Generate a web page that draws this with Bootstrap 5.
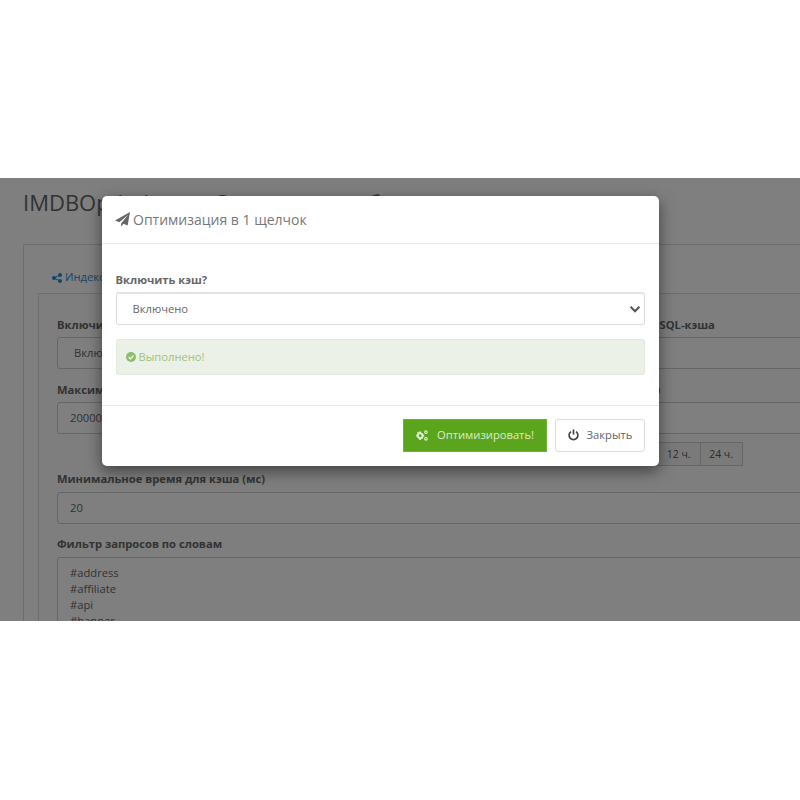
<!DOCTYPE html>
<html lang="ru">
<head>
<meta charset="utf-8">
<title>IMDBOptimizer</title>
<link href="https://cdn.jsdelivr.net/npm/bootstrap@5.3.0/dist/css/bootstrap.min.css" rel="stylesheet">
<style>
html,body{background:#fff;margin:0;padding:0;overflow:hidden}
body{font-family:"Open Sans","Noto Sans",sans-serif;font-size:11.2px;color:#666}
.shot{margin-top:178px;height:443px;position:relative;overflow:hidden;background:#fff}
.page-pad{padding:0 0 0 23px;width:900px}
.page-title{font-family:"Open Sans",sans-serif;font-size:22px;line-height:30px;margin:9px 0 27px;color:#666;font-weight:400;white-space:nowrap}
.outer-box{border:1px solid #ddd;padding:17px 0 0 14px}
.tab-link{display:block;height:31px;padding-left:14px;color:#1e91cf;font-size:11.2px;line-height:30px;margin-bottom:0}
.inner-box{border:1px solid #ddd;padding:23px 0 0 18px;background:#fcfcfc}
.two-col{display:grid;grid-template-columns:340px 1fr;column-gap:163px;width:850px}
.fld-label{font-weight:700;font-size:11.2px;color:#666;line-height:16px;margin-bottom:4px;display:block;white-space:nowrap}
.fld{display:block;width:100%;height:32px;border:1px solid #ccc;border-radius:3px;background:#fff;color:#666;font-size:11.2px;line-height:30px;padding:0 12px;margin-bottom:13px}
.fld-sel{padding-left:16px}
.full{width:850px}
.full .fld{margin-bottom:12px}
.full .fld-label{margin-bottom:5px}
.gap-btns{display:flex;justify-content:flex-end;height:24px;margin-top:-5px;margin-bottom:5px;padding-right:164px;width:850px}
.gap-btns span{border:1px solid #ccc;border-left:0;padding:0 9px 0 8.5px;font-size:10.5px;line-height:23px;color:#555;background:#f5f5f5}
.gap-btns span:first-child{border-left:1px solid #ccc}
.txt-fld{border:1px solid #ccc;border-radius:3px;background:#fff;padding:7px 12px;font-size:11.2px;line-height:16px;height:120px;color:#666}
.dim{position:absolute;inset:0;background:#000;opacity:.5}
.pop{position:absolute;left:102px;top:18px;width:557px;height:270px;background:#fff;border-radius:5px;box-shadow:0 5px 15px rgba(0,0,0,.5);display:flex;flex-direction:column}
.pop-head{height:48px;border-bottom:1px solid #e9e9e9;display:flex;align-items:center;padding:0 13px;gap:3px;font-size:14px;color:#777}
.pop-body{height:162px;border-bottom:1px solid #e9e9e9;padding:28px 14px 0 13.5px}
.pop-label{font-size:11.2px;font-weight:700;color:#666;line-height:16px;margin-bottom:4px}
.pop-sel{display:flex;align-items:center;justify-content:space-between;height:33px;border:1px solid #ddd;border-top:2px solid #e3e3e3;border-radius:3px;padding:0 2px 0 16px;color:#666;font-size:11.2px;margin-bottom:14px}
.ok-box{height:36px;background:#ebf1e6;border:1px solid #e0ead8;border-radius:3px;display:flex;align-items:center;gap:3px;padding:0 9px;color:#9cc47d;font-size:11.2px}
.pop-foot{flex:1;display:flex;justify-content:flex-end;align-items:center;gap:8px;padding:0 14px 2px}
.go-btn{height:33px;width:144px;background:#5aa51c;border:1px solid #6fb136;color:#dcebcd;font-size:11.2px;display:flex;align-items:center;justify-content:center;gap:9px;border-radius:0}
.close-btn{height:33px;width:90px;background:#fff;border:1px solid #ddd;border-radius:3px;color:#666;font-size:11.2px;display:flex;align-items:center;justify-content:center;gap:8px}
</style>
</head>
<body>
<div class="shot">
  <div class="page-pad">
    <h1 class="page-title">IMDBOptimizer — Оптимизация базы данных</h1>
    <div class="outer-box">
      <div class="tab-link">
        <svg width="10" height="10" viewBox="0 0 10 10" fill="#1e91cf"><circle cx="2" cy="5" r="2"/><circle cx="8" cy="2" r="2"/><circle cx="8" cy="8" r="2"/><path d="M2 5 8 2M2 5l6 3" stroke="#1e91cf"/></svg>
        Индексы
      </div>
      <div class="inner-box">
        <div class="two-col">
          <div><span class="fld-label">Включить кэш</span><div class="fld fld-sel">Включено</div></div>
          <div><span class="fld-label">Время жизни MySQL-кэша</span><div class="fld"></div></div>
          <div><span class="fld-label">Максимальный размер</span><div class="fld">200000</div></div>
          <div><span class="fld-label">Время кэша  (сек)</span><div class="fld"></div></div>
        </div>
        <div class="gap-btns"><span>12 ч.</span><span>24 ч.</span></div>
        <div class="full">
          <span class="fld-label">Минимальное время для кэша (мс)</span><div class="fld">20</div>
          <span class="fld-label">Фильтр запросов по словам</span>
          <div class="txt-fld">#address<br>#affiliate<br>#api<br>#banner</div>
        </div>
      </div>
    </div>
  </div>
  <div class="dim"></div>
  <div class="pop">
    <div class="pop-head">
      <svg width="15" height="15" viewBox="0 0 16 16" fill="#666"><path d="M16 0 13.5 14.5 9 12.6 6.5 15.8V12.3L14 3 4.7 11 0 9Z"/></svg>
      <span>Оптимизация в 1 щелчок</span>
    </div>
    <div class="pop-body">
      <div class="pop-label">Включить кэш?</div>
      <div class="pop-sel"><span>Включено</span>
        <svg width="14" height="14" viewBox="0 0 16 16" fill="none" stroke="#555" stroke-width="2.4"><path d="M3 5.5 8 10.5 13 5.5"/></svg>
      </div>
      <div class="ok-box">
        <svg width="10" height="10" viewBox="0 0 10 10"><circle cx="5" cy="5" r="5" fill="#8fbb6c"/><path d="M2.6 5.1 4.4 6.9 7.5 3.6" fill="none" stroke="#ebf1e6" stroke-width="1.4"/></svg>
        <span>Выполнено!</span>
      </div>
    </div>
    <div class="pop-foot">
      <div class="go-btn">
        <svg width="12" height="11" viewBox="0 0 13 12" fill="#e5f1da"><circle cx="4.5" cy="6.2" r="2.6" fill="none" stroke="#e5f1da" stroke-width="2"/><path d="M3.6 1.6h1.8v2H3.6zM3.6 8.8h1.8v2H3.6zM.1 5.3h2v1.8h-2zM6.9 5.3h2v1.8h-2zM1.2 2.2l1.3-.4.8 1.5-1.2.8zM6.5 9.8l-1-.9.9-1.1 1.2.8z"/><circle cx="10.8" cy="2.4" r="1.4" fill="none" stroke="#e5f1da" stroke-width="1.2"/><circle cx="10.8" cy="9.6" r="1.4" fill="none" stroke="#e5f1da" stroke-width="1.2"/></svg>
        <span>Оптимизировать!</span>
      </div>
      <div class="close-btn">
        <svg width="11" height="12" viewBox="0 0 11 12" fill="none" stroke="#444" stroke-width="1.7"><path d="M3 2.6a4.4 4.4 0 1 0 5 0"/><path d="M5.5 .5V5.6"/></svg>
        <span>Закрыть</span>
      </div>
    </div>
  </div>
</div>
<script src="https://cdn.jsdelivr.net/npm/bootstrap@5.3.0/dist/js/bootstrap.bundle.min.js"></script>
</body>
</html>
